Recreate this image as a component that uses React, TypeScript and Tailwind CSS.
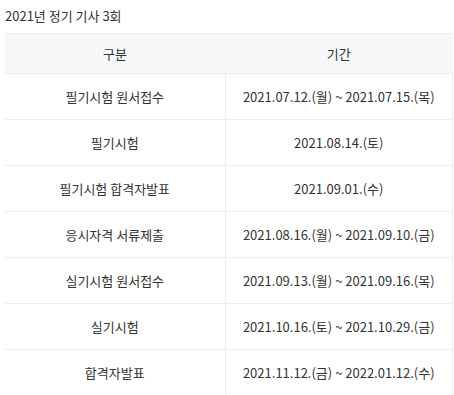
const rows: [string, string][] = [
  ["필기시험 원서접수", "2021.07.12.(월) ~ 2021.07.15.(목)"],
  ["필기시험", "2021.08.14.(토)"],
  ["필기시험 합격자발표", "2021.09.01.(수)"],
  ["응시자격 서류제출", "2021.08.16.(월) ~ 2021.09.10.(금)"],
  ["실기시험 원서접수", "2021.09.13.(월) ~ 2021.09.16.(목)"],
  ["실기시험", "2021.10.16.(토) ~ 2021.10.29.(금)"],
  ["합격자발표", "2021.11.12.(금) ~ 2022.01.12.(수)"],
];

export default function App() {
  return (
    <div
      className="bg-white pl-[5px] pt-[6px] text-[13px] text-[#333]"
      style={{ fontFamily: '"Noto Sans CJK KR", "Noto Sans", sans-serif' }}
    >
      <h2 className="h-[20px] leading-[20px] text-[13px] font-normal">2021년 정기 기사 3회</h2>
      <table className="mt-[7px] w-[448px] border-collapse table-fixed">
        <thead>
          <tr className="h-[40px] bg-[#f7f8fa] border-y border-[#ededed]">
            <th className="w-[220px] font-normal text-center">구분</th>
            <th className="font-normal text-center">기간</th>
          </tr>
        </thead>
        <tbody>
          {rows.map(([name, period]) => (
            <tr key={name} className="h-[46px] border-b border-[#ededed]">
              <td className="text-center border-r border-[#ededed]">{name}</td>
              <td className="text-center border-r border-[#ededed]">{period}</td>
            </tr>
          ))}
        </tbody>
      </table>
    </div>
  );
}
